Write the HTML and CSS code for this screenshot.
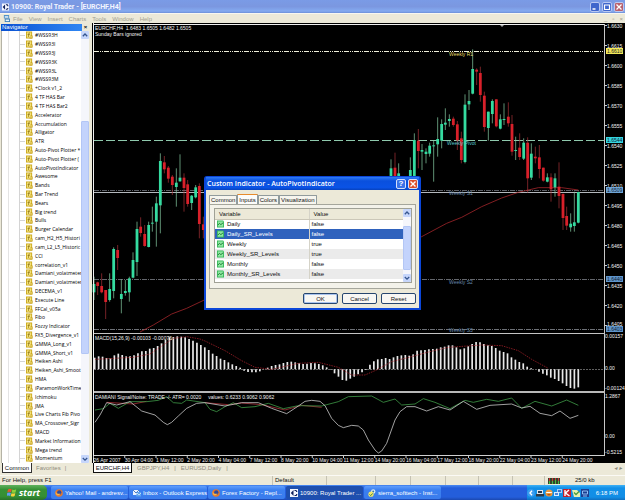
FILE: index.html
```html
<!DOCTYPE html>
<html lang="en">
<head>
<meta charset="utf-8">
<title>10900: Royal Trader - [EURCHF,H4]</title>
<link rel="stylesheet" href="styles.css">
</head>
<body>
<svg class="defs" aria-hidden="true">
  <symbol id="i-fx" viewBox="0 0 8 8"><path fill="#c9a71c" d="M0 0h7v8H0z"/><path fill="#f4e27a" d="M1 1h5v6H1z"/><path d="M4.600 1.600c-1.600-.3-1.500 1-1.800 4.600M1.800 3.400h2.600" stroke="#8d7214" stroke-width=".8" fill="none"/><path fill="#c39d14" d="M5 4.500h2.500V8H4z"/><path d="M4.700 5.200l2 2M6.700 5.200l-2 2" stroke="#fff3a0" stroke-width=".6"/></symbol>
  <symbol id="i-var" viewBox="0 0 8 8"><path fill="#35b558" d="M0 0h7l1 1v7H0z"/><path fill="#8ee8a0" d="M1 1h6v6H1z"/><path d="M1 5.200l1.800-1.900 1.600 1.400L6.800 2.800" stroke="#11702d" fill="none"/></symbol>
  <symbol id="i-up" viewBox="0 0 8 8"><path d="M1.800 5.200L4 3l2.200 2.200" stroke="#35558f" stroke-width="1.300" fill="none"/></symbol>
  <symbol id="i-down" viewBox="0 0 8 8"><path d="M1.800 3L4 5.200 6.200 3" stroke="#35558f" stroke-width="1.300" fill="none"/></symbol>
  <symbol id="i-royal" viewBox="0 0 8 8"><path fill="#f5f7ff" d="M0 0h8v8H0z"/><path fill="#10205c" d="M3.500 1v6L.8 4z"/><path d="M4.500 1.500h1.200a1 1 0 0 1 1 1V3M4.500 6.500h1.200a1 1 0 0 0 1-1V5" fill="none" stroke="#10205c" stroke-width="1.200"/></symbol>
  <symbol id="i-fox" viewBox="0 0 8 8"><circle cx="4" cy="4" r="3.800" fill="#e8792a"/><circle cx="4.300" cy="3.500" r="2.200" fill="#2c4a9e"/><path d="M.6 2C1 5 3 5 5.500 4.600 5 6.500 2 7 .8 5z" fill="#f7b64a"/></symbol>
  <symbol id="i-mail" viewBox="0 0 8 8"><path fill="#e9f2ff" d="M0 1h6v5H0z"/><path d="M0 1l3 3 3-3" stroke="#4b7cc4" fill="none"/><path fill="#5ca4ee" d="M4 3h4v4.500H3z"/><path d="M4 4l2 2 2-2" stroke="#fff" stroke-width=".6" fill="none"/></symbol>
  <symbol id="i-im" viewBox="0 0 8 8"><circle cx="5.200" cy="2.400" r="2.200" fill="#dcecf5"/><circle cx="5.200" cy="2.400" r="1" fill="#397aa0"/><circle cx="3" cy="5.200" r="2.600" fill="#f1e66b"/><path d="M1.500 5.400l1.200 1.200 2-2.200" fill="none" stroke="#2b7b45" stroke-width=".9"/></symbol>
</svg>

<header class="title">
  <svg class="title-icon"><use href="#i-royal"/></svg>
  <h1>10900: Royal Trader - [EURCHF,H4]</h1>
  <div class="winbtns">
    <button aria-label="Minimize"><svg viewBox="0 0 8 8"><path d="M1.500 6h3" stroke="#fff" stroke-width="1.500"/></svg></button>
    <button aria-label="Restore"><svg viewBox="0 0 8 8"><path d="M1.500 2h5v4.500h-5z" fill="none" stroke="#fff" stroke-width="1.200"/></svg></button>
    <button class="close" aria-label="Close"><svg viewBox="0 0 8 8"><path d="M1.500 1.500l5 5M6.500 1.500l-5 5" stroke="#fff" stroke-width="1.300"/></svg></button>
  </div>
</header>

<nav class="menu">
  <svg class="menu-icon" viewBox="0 0 8 8"><path fill="#4f93c9" d="M1 0h6v4H1z"/><path fill="#fff" d="M2 1.500h4V3H2z"/><path fill="#3f7fb5" d="M2 4h6v4H2z"/><path fill="#e8f5ff" d="M3 5.200h4V7H3z"/></svg>
  <a href="#">File</a><a href="#">View</a><a href="#">Insert</a><a href="#">Charts</a><a href="#">Tools</a><a href="#">Window</a><a href="#">Help</a>
  <span class="mdi"><button aria-label="Minimize chart">_</button><button aria-label="Restore chart">▫</button><button aria-label="Close chart">×</button></span>
</nav>

<main class="workspace">
  <aside class="navigator">
    <div class="nav-head"><h2>Navigator</h2><button aria-label="Close navigator">×</button></div>
    <div class="nav-body">
      <ul class="tree" id="tree"></ul>
      <div class="scroll">
        <button aria-label="Scroll up"><svg><use href="#i-up"/></svg></button>
        <div class="track"><div class="thumb"></div></div>
        <button aria-label="Scroll down"><svg><use href="#i-down"/></svg></button>
      </div>
    </div>
    <div class="nav-tabs"><button class="on">Common</button><button>Favorites</button><span>|</span></div>
  </aside>

  <section class="charts">
    <svg class="chart" id="chart" viewBox="92 23 533 440" role="img" aria-label="EURCHF,H4"></svg>
    <div class="chart-tabs"><button class="on">EURCHF,H4</button><button>GBPJPY,H4</button><span>|</span><button>EURUSD,Daily</button><span>|</span><i>◂ ▸</i></div>
  </section>

  <section class="dialog" role="dialog" aria-labelledby="dlg">
    <div class="dlg-title">
      <h2 id="dlg">Custom Indicator - AutoPivotIndicator</h2>
      <button class="help" aria-label="Help">?</button>
      <button class="close" aria-label="Close dialog"><svg viewBox="0 0 8 8"><path d="M1.500 1.500l5 5M6.500 1.500l-5 5" stroke="#fff" stroke-width="1.400"/></svg></button>
    </div>
    <div class="dlg-body">
      <div class="dlg-tabs"><button>Common</button><button class="on">Inputs</button><button>Colors</button><button>Visualization</button></div>
      <div class="panel">
        <div class="grid">
          <table>
            <thead><tr><th>Variable</th><th>Value</th></tr></thead>
            <tbody>
              <tr><td><svg><use href="#i-var"/></svg>Daily</td><td>false</td></tr>
              <tr class="sel"><td><svg><use href="#i-var"/></svg>Daily_SR_Levels</td><td>false</td></tr>
              <tr><td><svg><use href="#i-var"/></svg>Weekly</td><td>true</td></tr>
              <tr><td><svg><use href="#i-var"/></svg>Weekly_SR_Levels</td><td>true</td></tr>
              <tr><td><svg><use href="#i-var"/></svg>Monthly</td><td>false</td></tr>
              <tr><td><svg><use href="#i-var"/></svg>Monthly_SR_Levels</td><td>false</td></tr>
            </tbody>
          </table>
          <div class="scroll">
            <button aria-label="Scroll up"><svg><use href="#i-up"/></svg></button>
            <div class="track"><div class="thumb"></div></div>
            <button aria-label="Scroll down"><svg><use href="#i-down"/></svg></button>
          </div>
        </div>
      </div>
      <div class="actions"><button class="default">OK</button><button>Cancel</button><button>Reset</button></div>
    </div>
  </section>
</main>

<div class="status">
  <span>For Help, press F1</span><span>Default</span><span></span><span></span><span></span><span></span><span></span><span></span>
  <span class="traffic"><svg viewBox="0 0 12 6"><path fill="#35432c" d="M0 0h12v6H0z"/><path stroke="#c33" d="M1.500 0v3M4.500 0v3M7.500 0v2M10.500 0v3"/><path stroke="#4b4" d="M1.500 3v3M4.500 3v3M7.500 2v4M10.500 3v3"/></svg>25/0 kb</span>
</div>

<footer class="taskbar">
  <button class="start"><svg viewBox="0 0 10 9"><path fill="#e8542c" d="M1 1.500Q3 .3 4.700 1.300L4 4.300Q2.300 3.300.3 4.400z"/><path fill="#8bd03c" d="M5.300 1.500Q7 2.400 9.200 1.300L8.500 4.400Q6.500 5.300 4.700 4.400z"/><path fill="#5f9df5" d="M.2 5Q2 4 3.900 5L3.200 8Q1.500 7-.3 8z"/><path fill="#f8d23c" d="M4.500 5.200Q6.300 6 8.300 5L7.600 8Q5.700 9 3.800 8z"/></svg>start</button>
  <div class="tasks">
    <button><svg><use href="#i-fox"/></svg>Yahoo! Mail - andresv...</button>
    <button><svg><use href="#i-mail"/></svg>Inbox - Outlook Express</button>
    <button><svg><use href="#i-fox"/></svg>Forex Factory - Repl...</button>
    <button class="on"><svg><use href="#i-royal"/></svg>10900: Royal Trader ...</button>
    <button><svg><use href="#i-im"/></svg>sierra_softtech - Inst...</button>
  </div>
  <div class="tray">
    <svg viewBox="0 0 8 8"><circle cx="4" cy="4" r="3.800" fill="#3c9cf0"/><path d="M5 1.800L3 4l2 2.200" stroke="#fff" stroke-width="1.300" fill="none"/></svg>
    <svg viewBox="0 0 8 8"><path fill="#dde5ee" d="M1 1h6v4H1z"/><path fill="#26394f" d="M2 2h4v2H2z"/><path fill="#323a44" d="M0 5h8v2.500H0z"/></svg>
    <svg viewBox="0 0 8 8"><circle cx="4" cy="4" r="3.600" fill="#f09a3c"/><path fill="#fff" d="M1.200 3h5.600v1H1.200z"/><path stroke="#8a3a10" d="M2.500 5.800h3"/></svg>
    <svg viewBox="0 0 8 8"><path fill="#a9d0f5" d="M3 0h5v4H3z"/><path fill="#3b74c9" d="M4 1h3v2H4z"/><path fill="#d9ecff" d="M0 3h5v4H0z"/><path fill="#4f88da" d="M1 4h3v2H1z"/></svg>
    <svg viewBox="0 0 8 8"><path fill="#c4202c" d="M0 0h8v8H0z"/><path d="M2 1v6M6 1L2.500 4 6.500 7" stroke="#fff" stroke-width="1.400" fill="none"/></svg>
    <svg viewBox="0 0 8 8"><path fill="#e7efb0" d="M0 1h5l3 3v4H2z"/><path d="M2 3.500l2 2 3-3" stroke="#4d9a3c" stroke-width="1.300" fill="none"/></svg>
    <svg viewBox="0 0 8 8"><path fill="#1d3f91" d="M0 0h8v8H0z"/><path d="M1.500 5V2h5v3zM2 7h4" stroke="#8fbdf3" fill="none"/></svg>
    <time>6:18 PM</time>
  </div>
</footer>
<script src="app.js"></script>
</body>
</html>
```
FILE: styles.css
```css
* { box-sizing: border-box; margin: 0; padding: 0; }
body { height: 100vh; display: flex; flex-direction: column; overflow: hidden; background: #ece9d8; color: #111; font: 6px/8px "Liberation Sans", Arial, sans-serif; }
button { font: inherit; color: inherit; background: none; border: 0; display: flex; align-items: center; justify-content: center; white-space: nowrap; }
h1, h2 { font: inherit; font-weight: bold; white-space: nowrap; }
a { color: inherit; text-decoration: none; }
svg { display: block; flex: none; }
.defs { position: absolute; width: 0; height: 0; }

.title { flex: none; height: 13px; display: flex; align-items: center; gap: 2px; padding: 0 1px 0 2px; background: linear-gradient(#7a9be6, #7b97e0 50%, #84aaf0 85%, #6d8fd8); color: #f2f5ff; }
.title-icon { width: 7px; height: 8px; }
.title h1 { font: bold 7px/10px Roboto, sans-serif; flex: 1; }
.winbtns { display: flex; gap: 2px; }
.winbtns button { width: 10px; height: 10px; border: 1px solid #b9c8f2; border-radius: 2px; background: #3f66cc; }
.winbtns svg { width: 8px; height: 8px; }
.winbtns .close { background: #b8616e; }

.menu { flex: none; height: 10px; display: flex; align-items: center; gap: 6px; padding: 0 2px 0 3px; color: #a29f90; border-top: 1px solid #f8f7f0; }
.menu-icon { width: 7px; height: 7px; margin-right: -3px; }
.mdi { margin-left: auto; display: flex; gap: 5px; }

.workspace { flex: 1; min-height: 0; display: flex; gap: 2px; position: relative; }
.navigator { width: 90px; flex: none; display: flex; flex-direction: column; padding: 1px 1px 0 1px; }
.nav-head { display: flex; height: 7px; }
.nav-head h2 { flex: 1; background: linear-gradient(90deg, #0a52d2, #2f86f3); color: #fff; padding-left: 1px; line-height: 7px; font-weight: normal; }
.nav-head button { width: 7px; font-weight: bold; line-height: 7px; }
.nav-body { flex: 1; min-height: 0; display: flex; background: #fff; border: 1px solid #b5b3a6; border-width: 0 0 0 1px; }
.tree { flex: 1; min-width: 0; list-style: none; display: flex; flex-direction: column; overflow: hidden; padding-left: 6px; font-family: "Open Sans", sans-serif; font-size: 5px; color: #000; }
.tree li { flex: 1; min-height: 0; display: flex; align-items: center; gap: 2px; white-space: nowrap; border-left: 1px solid #e4e4e4; padding-left: 10px; }
.tree li::before { content: ""; flex: none; width: 5px; height: 100%; margin-right: -1px; border-left: 1px solid #d4d4d4; background: linear-gradient(#d4d4d4, #d4d4d4) center / 100% 1px no-repeat; }
.tree svg { width: 7px; height: 8px; }
.scroll { width: 8px; flex: none; display: flex; flex-direction: column; background: #f5f6fb; }
.scroll button { height: 8px; flex: none; background: #c6d6fb; border-radius: 1px; }
.scroll svg { width: 8px; height: 8px; }
.track { flex: 1; display: flex; flex-direction: column; }
.thumb { background: #c3d3fc; border: 1px solid #b3c6f5; border-radius: 1px; }
.nav-body .thumb { height: 56%; margin-top: 82px; }
.nav-tabs, .chart-tabs { flex: none; height: 12px; display: flex; align-items: flex-start; color: #8d8a7c; }
.nav-tabs { padding-left: 1px; gap: 4px; }
.nav-tabs button, .chart-tabs button { height: 10px; }
.nav-tabs .on { width: 30px; border: 1px solid #333; border-top: 0; background: #fff; color: #111; }
.nav-tabs span, .chart-tabs span { line-height: 10px; }

.charts { flex: 1; min-width: 0; display: flex; flex-direction: column; }
.chart { flex: 1; min-height: 0; width: 100%; background: #000; }
.chart text { font: 5px "Liberation Sans", Arial, sans-serif; }
.chart-tabs { gap: 5px; padding-left: 1px; }
.chart-tabs .on { width: 39px; border: 1px solid #111; border-top: 0; background: #fff; color: #111; }
.chart-tabs i { margin-left: auto; margin-right: 3px; line-height: 10px; }

.dialog { position: absolute; left: 204px; top: 153px; width: 217px; background: #0b46d8; padding: 1px 2px 2px; border-radius: 3px 3px 0 0; }
.dlg-title { height: 13px; display: flex; align-items: center; gap: 2px; padding: 0 1px; color: #fff; background: linear-gradient(#2f7bf6, #0a50dd 30%, #0a53e6 80%, #0742be); }
.dlg-title h2 { flex: 1; font-size: 7px; font-family: "Open Sans", sans-serif; font-weight: 600; }
.dlg-title button { width: 10px; height: 10px; border: 1px solid #d6e0fa; border-radius: 2px; background: #3b72e8; font-size: 8px; font-weight: bold; }
.dlg-title .close { background: #dc4f2c; }
.dlg-title svg { width: 8px; height: 8px; }
.dlg-body { background: #ece9d8; padding: 4px 3px 4px; }
.dlg-tabs { display: flex; height: 10px; align-items: flex-end; }
.dlg-tabs button { height: 9px; padding: 0 1px; border: 1px solid #919b9c; border-bottom: 0; border-radius: 1px 1px 0 0; background: #f6f5ee; }
.dlg-tabs .on { height: 10px; border-top-color: #e68b2c; background: #fcfcfa; }
.panel { border: 1px solid #a5a69c; background: #f3f2ea; padding: 3px 3px 5px 4px; }
.grid { display: flex; height: 75px; border: 1px solid #a0a196; background: #fff; }
table { flex: 1; align-self: flex-start; table-layout: fixed; border-collapse: collapse; width: 100%; }
th { height: 10px; text-align: left; font-weight: normal; background: #ece9d8; padding-left: 4px; border-bottom: 1px solid #cbc7b8; }
th:first-child, td:first-child { width: 94px; border-right: 1px solid #d5d3c8; }
td { height: 10px; padding-left: 2px; line-height: 8px; }
td svg { display: inline-block; width: 7px; height: 8px; margin-right: 3px; vertical-align: middle; }
tbody tr:nth-child(even) { background: #ebebeb; }
tbody tr.sel { background: #2f62bd; color: #fff; }
.grid .thumb { height: 44px; margin-top: 9px; }
.actions { display: flex; justify-content: flex-end; gap: 4px; padding-top: 4px; }
.actions button { width: 35px; height: 11px; border: 1px solid #27466e; border-radius: 2px; background: #f8f7f3; }
.actions .default { box-shadow: inset 0 0 0 1px #a9c4ee; }

.status { flex: none; height: 10px; display: grid; grid-template-columns: 273fr 54fr 49fr 35fr 35fr 33fr 34fr 32fr 80fr; border-top: 1px solid #fbfaf5; }
.status span { padding-left: 2px; line-height: 9px; border-right: 1px solid #c5c2b3; white-space: nowrap; }
.status .traffic { display: flex; align-items: center; gap: 15px; border: 0; padding-left: 3px; }
.traffic svg { width: 12px; height: 6px; }

.taskbar { flex: none; height: 15px; display: flex; background: linear-gradient(#4a8af2, #245edb 20%, #245edb 80%, #1b48b0); color: #fff; }
.start { width: 47px; gap: 2px; background: linear-gradient(#5fb25c, #379136 30%, #358f35 75%, #287028); border-radius: 0 5px 5px 0; font: italic bold 9px/12px "Open Sans", sans-serif; }
.start svg { width: 10px; height: 9px; }
.tasks { flex: 1; display: flex; gap: 1px; padding: 1px 0 1px 4px; min-width: 0; }
.tasks button { flex: 0 1 77px; justify-content: flex-start; gap: 2px; padding-left: 4px; background: linear-gradient(#5f9dfb, #3b80f0 30%, #3a7cec); border-radius: 2px; }
.tasks .on { background: #1e4fae; }
.tasks svg, .tray svg { width: 8px; height: 8px; }
.tray { flex: none; display: flex; align-items: center; gap: 1px; padding: 0 7px 0 0; background: linear-gradient(#3fb2f5, #1290e8 20%, #128ee6 80%, #0f6fc0); }
.tray time { margin-left: 6px; }
```
FILE: app.js
```js
const items = ['#WSS93H', '#WSS93I', '#WSS93J', '#WSS93K', '#WSS93L', '#WSS93M', '+Clock v1_2', '4 TF HAS Bar', '4 TF HAS Bar2',
  'Accelerator', 'Accumulation', 'Alligator', 'ATR', 'Auto-Pivot Plotter *', 'Auto-Pivot Plotter (', 'AutoPivotIndicator',
  'Awesome', 'Bands', 'Bar Trend', 'Bears', 'Big trend', 'Bulls', 'Burger Calendar', 'cam_H2_H5_Histori', 'cam_L2_L5_Historic',
  'CCI', 'correlation_v1', 'Damiani_volatmeter', 'Damiani_volatmeter', 'DECEMA_v1', 'Execute Line', 'FFCal_v05a', 'Fibo',
  'Fozzy Indicator', 'FX5_Divergence_v1', 'GMMA_Long_v1', 'GMMA_Short_v1', 'Heiken Ashi', 'Heiken_Ashi_Smoot', 'HMA',
  'iParamonWorkTime', 'Ichimoku', 'JMA', 'Live Charts Fib Pivo', 'MA_Crossover_Sigr', 'MACD', 'Market Information', 'Mega trend', 'Momentum'];
document.getElementById('tree').innerHTML = items.map(t => `<li><svg><use href="#i-fx"/></svg>${t}</li>`).join('');

const G = '#35dba0', R = '#d8202a';
let out = '';
const line = (x1, y1, x2, y2, stroke, w = 1, dash = '') =>
  out += `<line x1="${x1}" y1="${y1}" x2="${x2}" y2="${y2}" stroke="${stroke}" stroke-width="${w}" stroke-dasharray="${dash}"/>`;
const text = (x, y, t, fill = '#f4f4f4') => out += `<text x="${x}" y="${y}" fill="${fill}">${t}</text>`;
const poly = (pts, stroke, w = .8, dash = '') =>
  out += `<polyline points="${pts.map(p => p.join()).join(' ')}" fill="none" stroke="${stroke}" stroke-width="${w}" stroke-dasharray="${dash}"/>`;
const at = (ox, oy, pts) => pts.map(([x, y]) => [ox + x / 3, oy + y / 3]);

// Pivot levels
line(94, 51.5, 604, 51.5, '#f2f2dc', 1, '5 1 1 1 1 1');
line(94, 140.5, 604, 140.5, '#8fc9ad', 1, '9 3');
line(94, 190.5, 604, 190.5, '#5c5f66', 1, '5 1 1 1');
line(94, 192.5, 604, 192.5, '#b4b8bd');
line(94, 279.5, 604, 279.5, '#63666c', 1, '5 1 1 1');
line(94, 329.5, 604, 329.5, '#6d7076', 1, '5 1 1 1');

// Moving average
poly(at(90, 130, [[150, 606], [190, 585], [245, 552], [290, 535], [345, 509]]), '#a3262b');
poly(at(415, 165, [[0, 225], [20, 215], [95, 175], [140, 157], [200, 125], [260, 99], [310, 82], [370, 68], [440, 68], [490, 75]]), '#a3262b');

// Candles: x, high, body top, body bottom, low, up
const left = [[12, 440, 462, 487, 510, 1], [23, 455, 457, 468, 495, 0], [35, 430, 468, 487, 490, 0], [47, 480, 480, 516, 567, 0], [59, 430, 477, 510, 515, 1],
  [71, 352, 357, 483, 505, 1], [83, 345, 360, 384, 420, 0], [94, 448, 492, 507, 550, 1], [106, 450, 483, 489, 497, 1], [118, 440, 445, 487, 515, 1],
  [129, 367, 390, 443, 445, 1], [141, 275, 297, 396, 438, 1], [152, 262, 290, 309, 320, 0], [164, 285, 312, 348, 350, 0], [176, 275, 285, 351, 352, 1],
  [187, 230, 278, 281, 305, 1], [199, 200, 220, 275, 350, 1], [211, 70, 93, 226, 310, 1], [223, 78, 97, 118, 130, 0], [235, 108, 113, 146, 158, 0],
  [247, 135, 140, 165, 195, 0], [259, 115, 158, 171, 230, 1], [270, 73, 143, 154, 155, 1], [282, 130, 143, 174, 245, 0], [293, 150, 163, 222, 230, 0],
  [305, 195, 197, 219, 240, 1], [317, 165, 172, 202, 205, 1], [328, 160, 168, 282, 325, 0], [340, 260, 283, 300, 325, 0]];
const right = [[-72, 478, 505, 560, 570, 1], [-60, 458, 503, 560, 570, 0], [-49, 490, 520, 560, 570, 1], [-14, 472, 510, 560, 570, 1],
  [-2, 400, 420, 560, 570, 1], [10, 387, 422, 453, 505, 0], [21, 432, 450, 455, 510, 1], [33, 445, 455, 462, 490, 1], [44, 428, 437, 461, 470, 1],
  [56, 420, 436, 439, 545, 1], [68, 352, 417, 433, 470, 1], [80, 358, 372, 422, 445, 1], [91, 325, 368, 374, 390, 1], [103, 343, 357, 363, 380, 1],
  [115, 350, 356, 375, 380, 0], [127, 363, 373, 421, 450, 0], [139, 395, 415, 480, 490, 0], [150, 283, 314, 486, 490, 1], [162, 270, 303, 313, 330, 1],
  [173, 148, 207, 281, 283, 1], [185, 205, 209, 215, 255, 0], [196, 200, 219, 285, 305, 0], [208, 275, 287, 381, 395, 0], [220, 335, 335, 384, 422, 1],
  [232, 298, 303, 342, 370, 1], [244, 298, 298, 379, 382, 0], [256, 343, 358, 386, 388, 1], [267, 310, 357, 360, 375, 1], [280, 307, 350, 370, 380, 0],
  [291, 345, 372, 455, 467, 0], [302, 410, 450, 453, 480, 1], [314, 400, 443, 471, 480, 0], [326, 415, 428, 476, 480, 1], [338, 412, 428, 535, 578, 0],
  [349, 430, 461, 533, 540, 1], [361, 440, 470, 475, 490, 0], [373, 435, 472, 507, 535, 0], [385, 503, 503, 542, 545, 0], [397, 520, 532, 545, 547, 1],
  [408, 520, 532, 568, 605, 0], [420, 520, 535, 562, 590, 1], [432, 487, 560, 588, 625, 0], [444, 580, 582, 654, 690, 0], [455, 620, 648, 677, 690, 0],
  [467, 640, 671, 682, 695, 1], [478, 575, 667, 678, 695, 1], [490, 575, 576, 668, 670, 1]];
const candles = (data, ox, oy) => data.forEach(([x, hi, a, b, lo, up]) => {
  const cx = ox + x / 3;
  line(cx, oy + hi / 3, cx, oy + lo / 3, up ? '#86cfa5' : '#a83036', .7);
  line(cx, oy + a / 3, cx, oy + b / 3, up ? G : R, 2.8);
});
candles(left, 90, 130);
candles(right, 415, 0);

// MACD histogram
const macd = [83, 79, 80, 84, 84, 76, 71, 75, 79, 79, 76, 70, 64, 63, 56, 54, 48, 40, 30, 22, 21, 19, 20, 22, 27, 32, 38, 45, 52, 60,
  71, 78, 86, 90, 97, 103, 108, 113, 122, 126, 127, 127, 124, 118, 113, 108, 105, 103, 99, 96, 95, 97, 100, 102, 101, 99, 100, 102, 106, 112,
  119, 130, 140, 150, 152, 146, 140, 133, 127, 120, 104, 94, 88, 87, 84, 87, 82, 78, 76, 75, 77, 73,
  62, 61, 60, 58, 57, 56, 52, 50, 46, 46, 52, 58, 55, 49, 42, 36, 37, 42, 46, 48, 54, 62, 66, 70, 82, 89, 96, 100, 110, 115, 118, 125,
  131, 136, 143, 147, 153, 160, 168, 174, 176, 172];
line(94, 369.5, 604, 369.5, '#8a8a8a', .7, '2 1');
macd.forEach((v, i) => { const x = 94.7 + 483.6 * i / (macd.length - 1); line(x, 369.2, x, 330 + v / 3, '#e8e8e8', 1.7); });
poly([...at(0, 330, [[285, 88], [400, 82], [450, 72], [490, 45], [520, 25], [560, 20], [600, 27]]),
  ...at(205, 330, [[0, 33], [60, 62], [110, 92], [150, 112], [200, 118], [280, 100], [340, 97], [400, 112], [440, 135], [480, 135], [510, 122], [560, 95], [620, 80]]),
  ...at(415, 330, [[40, 66], [100, 52], [200, 45], [260, 47], [310, 62], [350, 88], [400, 115]])], '#a02028', .8, '1.500 1');

// Signal / noise panel
poly(at(0, 330, [[320, 217], [400, 222], [440, 214]]), '#b03038');
poly(at(205, 330, [[0, 218], [70, 224], [110, 219], [170, 224], [240, 240], [290, 226], [350, 232]]), '#a83038');
poly([...at(0, 330, [[285, 240], [310, 236], [330, 220], [355, 235], [390, 215], [440, 215], [475, 211], [500, 200], [520, 218], [545, 220], [560, 210]]),
  ...at(205, 330, [[0, 218], [15, 238], [35, 245], [60, 230], [85, 218], [110, 233], [150, 230], [190, 220], [235, 236], [280, 227], [350, 228], [400, 215], [430, 200], [500, 198], [535, 217], [570, 207], [590, 225]]),
  ...at(415, 330, [[0, 222], [25, 206], [60, 217], [105, 236], [150, 211], [175, 217], [215, 208], [250, 214], [290, 204], [320, 235], [360, 214], [410, 228], [455, 210], [490, 226]])], '#3f9a48');
poly([...at(0, 330, [[285, 277], [300, 255], [320, 218], [350, 225], [390, 215], [425, 243], [465, 255], [490, 277], [502, 284], [515, 277], [535, 258], [560, 235], [590, 220]]),
  ...at(205, 330, [[0, 218], [60, 228], [110, 218], [160, 218], [200, 235], [245, 251], [280, 228], [300, 214], [320, 211], [345, 214], [360, 227], [380, 265], [400, 286], [415, 293], [440, 286], [460, 288], [475, 300], [490, 330], [510, 360], [520, 369], [530, 363], [545, 340], [570, 270], [585, 245], [605, 230]]),
  ...at(415, 330, [[0, 230], [35, 243], [70, 230], [105, 240], [145, 214], [185, 238], [225, 226], [290, 222], [320, 234], [345, 229], [375, 250], [410, 257], [435, 243], [465, 265], [490, 256]])], '#c9c9c9');

// Frame and axes
line(93.5, 23, 93.5, 463, '#f0f0f0');
line(94, 24.5, 605, 24.5, '#f0f0f0');
line(604.5, 24, 604.5, 456, '#c8c8c8');
line(94, 333.5, 605, 333.5, '#c4c4c4', 1);
line(94, 392, 605, 392, '#b8b8b8', 2);
line(94, 455.5, 605, 455.5, '#d0d0d0');
out += '<path d="M500 25h4l-2 2z" fill="#aaa"/>';
for (let i = 0; i < 16; i++) {
  line(605, 25.5 + i * 20, 607, 25.5 + i * 20, '#c8c8c8');
  text(607, (i === 15 ? 26 : 28) + i * 20, (1.663 - i * .0015).toFixed(4));
}
[[51, '1.6610', '#f3ea5a', '#222'], [140, '1.6544', '#35d5e0', '#123'], [190, '1.6509', '#6fa5d6', '#123'], [279, '1.6440', '#5f95cb', '#123'], [329, '1.6403', '#5f95cb', '#123']].forEach(([y, t, bg, fg]) => {
  out += `<rect x="606" y="${y - 3}" width="17" height="6" fill="${bg}"/>`;
  text(607, y + 2, t, fg);
});
[[338, '0.00157'], [370, '0.00'], [390, '-0.00124'], [398, '1.2867'], [438, '0.00'], [454, '-0.5215']].forEach(([y, t]) => text(605, y, t));
['26 Apr 2007', '30 Apr 04:00', '1 May 12:00', '2 May 20:00', '4 May 04:00', '7 May 12:00', '8 May 20:00', '10 May 04:00', '11 May 12:00', '14 May 20:00', '16 May 04:00', '17 May 12:00', '18 May 20:00', '22 May 04:00', '23 May 12:00', '24 May 20:00'].forEach((t, i) => {
  const x = 93.5 + i * 31.25;
  line(x, 456, x, 458, '#ccc');
  text(x, 462, t);
});
text(95, 30, 'EURCHF,H4&#160; 1.6483 1.6505 1.6482 1.6505');
text(95, 36, 'Sunday Bars ignored');
text(95, 340, 'MACD(15,26,9) -0.00103 -0.00076');
text(95, 399, 'DAMIANI Signal/Noise: TRADE -/- ATR= 0.0020 &#160; &#160; values: 0.6233 0.9062 0.9062');
text(449, 56, 'Weekly R1', '#e4dc6a');
text(447, 145, 'Weekly Pivot', '#58c9cf');
text(449, 195, 'Weekly S1', '#6688ab');
text(449, 284, 'Weekly S2', '#6688ab');
text(449, 332, 'Weekly S3', '#6688ab');
document.getElementById('chart').innerHTML = out;
```
